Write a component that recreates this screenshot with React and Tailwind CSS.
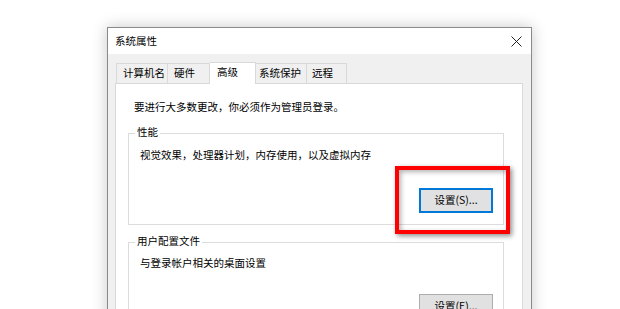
export default function App() {
  const font = { fontFamily: '"Noto Sans CJK SC", "Noto Sans", sans-serif' };
  return (
    <div className="w-[620px] h-[309px] overflow-hidden bg-white pl-[107px] pt-[27px] text-[10.5px] text-black" style={font}>
      <div className="relative w-[425px] h-[300px] border border-[#8a8a8a] shadow-[0_0_14px_rgba(0,0,0,0.22)] bg-[#f0f0f0] flex flex-col">
        <div className="h-[26px] bg-white flex items-center justify-between pl-[7px] pr-[9px] shrink-0">
          <span className="leading-none">系统属性</span>
          <svg width="11" height="11" viewBox="0 0 11 11" className="block">
            <path d="M0.5 0.5 L10.5 10.5 M10.5 0.5 L0.5 10.5" stroke="#222" strokeWidth="1" />
          </svg>
        </div>
        <div className="flex flex-col pl-[7px] pr-[8px] pt-[8px] flex-1">
          <div className="flex items-end h-[21px] pl-[1px] relative z-10">
            <div className="w-[52px] h-[20px] border border-b-0 border-[#d9d9d9] flex items-center pl-[6px] leading-none">计算机名</div>
            <div className="w-[42px] h-[20px] border border-b-0 border-l-0 border-[#d9d9d9] flex items-center pl-[6px] leading-none">硬件</div>
            <div className="w-[46px] h-[22px] -mb-[1px] border border-b-0 border-l-0 border-[#d9d9d9] bg-white flex items-start pt-[4px] pl-[7px] leading-none">高级</div>
            <div className="w-[51px] h-[20px] border border-b-0 border-l-0 border-[#d9d9d9] flex items-center pl-[3px] leading-none">系统保护</div>
            <div className="w-[40px] h-[20px] border border-b-0 border-l-0 border-[#d9d9d9] flex items-center pl-[5px] leading-none">远程</div>
          </div>
          <div className="flex-1 bg-white border border-[#d9d9d9] pl-[12px] pr-[18px] flex flex-col">
            <div className="pl-[6px] pt-[18px] leading-none h-[44px]">要进行大多数更改，你必须作为管理员登录。</div>
            <div className="relative h-[92px] border border-[#dcdcdc] mt-[5px] flex flex-col">
              <span className="absolute -top-[7px] left-[6px] bg-white px-[2px] leading-none">性能</span>
              <div className="pl-[11px] pt-[16px] leading-none">视觉效果，处理器计划，内存使用，以及虚拟内存</div>
              <div className="flex-1 flex items-end justify-end pr-[10px] pb-[11px]">
                <div className="w-[74px] h-[25px] bg-[#e1e1e1] border-2 border-[#0078d7] flex items-center justify-center leading-none">设置(S)...</div>
              </div>
            </div>
            <div className="relative h-[80px] border border-[#dcdcdc] mt-[17px] flex flex-col">
              <span className="absolute -top-[7px] left-[6px] bg-white px-[2px] leading-none">用户配置文件</span>
              <div className="pl-[11px] pt-[15px] leading-none">与登录帐户相关的桌面设置</div>
              <div className="flex-1 flex items-start justify-end pr-[10px] pt-[25px]">
                <div className="w-[74px] h-[25px] bg-[#e1e1e1] border border-[#adadad] flex items-center justify-center leading-none">设置(E)...</div>
              </div>
            </div>
          </div>
        </div>
        <div className="absolute left-[287px] top-[138px] w-[115px] h-[68px] border-4 border-[#ff0000] shadow-[2px_2px_5px_rgba(0,0,0,0.45),inset_2px_2px_5px_rgba(0,0,0,0.3)]"></div>
      </div>
    </div>
  );
}
